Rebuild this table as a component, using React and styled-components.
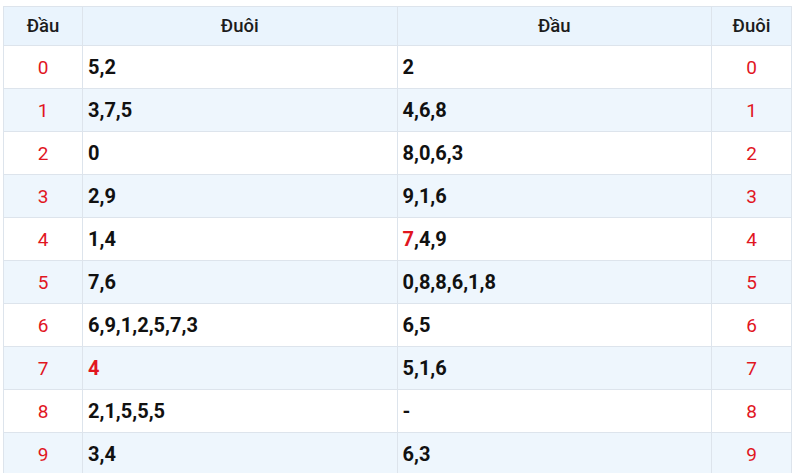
import React from 'react';
import styled, { createGlobalStyle } from 'styled-components';

const GlobalStyle = createGlobalStyle`
  html, body {
    margin: 0;
    padding: 0;
    background: #ffffff;
    font-family: Roboto, 'Liberation Sans', Arial, sans-serif;
  }
`;

const Wrapper = styled.div`
  padding: 6px 8px 0 3px;
`;

const Table = styled.table`
  width: 100%;
  border-collapse: collapse;
  table-layout: fixed;
`;

const HeadCell = styled.th`
  height: 38px;
  padding: 0;
  background: #eaf4fd;
  border: 1px solid #dde4ec;
  font-size: 18.5px;
  font-weight: 500;
  color: #1c1c1c;
  text-align: center;
  width: ${props => props.$w || 'auto'};
`;

const Row = styled.tr`
  background: ${props => (props.$alt ? '#eef6fd' : '#ffffff')};
`;

const KeyCell = styled.td`
  height: 42px;
  padding: 0;
  border: 1px solid #dde4ec;
  text-align: center;
  font-size: 19px;
  color: #e1161f;
`;

const ValueCell = styled.td`
  height: 42px;
  padding: 0 5px;
  border: 1px solid #dde4ec;
  font-size: 20px;
  font-weight: 700;
  color: #111111;
`;

const Hot = styled.span`
  color: #e1161f;
`;

const rows = [
  { dau: '5,2', duoi: '2' },
  { dau: '3,7,5', duoi: '4,6,8' },
  { dau: '0', duoi: '8,0,6,3' },
  { dau: '2,9', duoi: '9,1,6' },
  { dau: '1,4', duoi: '7,4,9', hotDuoi: '7' },
  { dau: '7,6', duoi: '0,8,8,6,1,8' },
  { dau: '6,9,1,2,5,7,3', duoi: '6,5' },
  { dau: '4', duoi: '5,1,6', hotDau: '4' },
  { dau: '2,1,5,5,5', duoi: '-' },
  { dau: '3,4', duoi: '6,3' },
];

const renderValue = (text, hot) => {
  if (!hot) return text;
  return (
    <>
      <Hot>{hot}</Hot>
      {text.slice(hot.length)}
    </>
  );
};

const App = () => {
  return (
    <Wrapper>
      <GlobalStyle />
      <Table>
        <thead>
          <tr>
            <HeadCell $w="78px">Đầu</HeadCell>
            <HeadCell>Đuôi</HeadCell>
            <HeadCell>Đầu</HeadCell>
            <HeadCell $w="79px">Đuôi</HeadCell>
          </tr>
        </thead>
        <tbody>
          {rows.map((row, i) => (
            <Row key={i} $alt={i % 2 === 1}>
              <KeyCell>{i}</KeyCell>
              <ValueCell>{renderValue(row.dau, row.hotDau)}</ValueCell>
              <ValueCell>{renderValue(row.duoi, row.hotDuoi)}</ValueCell>
              <KeyCell>{i}</KeyCell>
            </Row>
          ))}
        </tbody>
      </Table>
    </Wrapper>
  );
};

export default App;
